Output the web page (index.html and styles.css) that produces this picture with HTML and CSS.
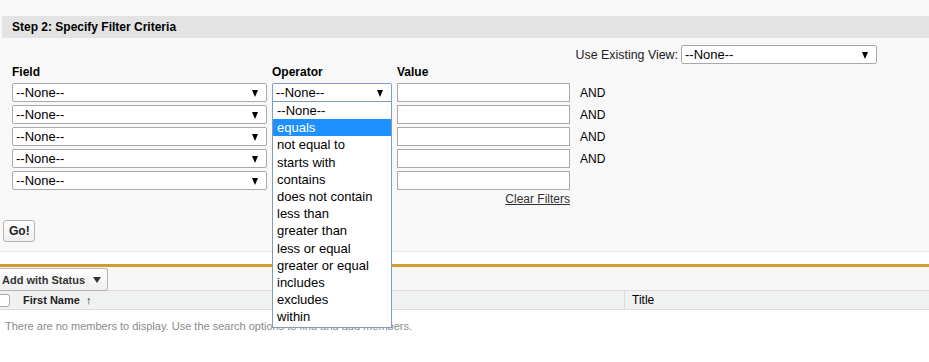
FILE: index.html
```html
<!DOCTYPE html>
<html lang="en">
<head>
  <meta charset="UTF-8">
  <meta name="viewport" content="width=device-width, initial-scale=1.0">
  <title>Specify Filter Criteria</title>
  <link rel="stylesheet" href="styles.css">
</head>
<body>
  <div class="filter-panel">
    <h2 class="step-title">Step 2: Specify Filter Criteria</h2>

    <div class="view-row">
      <span class="view-label">Use Existing View:</span>
      <div class="select view-select">--None--</div>
    </div>

    <div class="criteria">
      <div class="col-label">Field</div>
      <div class="col-label">Operator</div>
      <div class="col-label">Value</div>
      <div></div>

      <div class="select">--None--</div>
      <div class="op-cell">
        <div class="select focused">--None--</div>
        <ul class="op-list">
          <li>--None--</li>
          <li class="active">equals</li>
          <li>not equal to</li>
          <li>starts with</li>
          <li>contains</li>
          <li>does not contain</li>
          <li>less than</li>
          <li>greater than</li>
          <li>less or equal</li>
          <li>greater or equal</li>
          <li>includes</li>
          <li>excludes</li>
          <li>within</li>
        </ul>
      </div>
      <input class="value" type="text">
      <span class="and">AND</span>

      <div class="select">--None--</div>
      <div class="select hidden-op"></div>
      <input class="value" type="text">
      <span class="and">AND</span>

      <div class="select">--None--</div>
      <div class="select hidden-op"></div>
      <input class="value" type="text">
      <span class="and">AND</span>

      <div class="select">--None--</div>
      <div class="select hidden-op"></div>
      <input class="value" type="text">
      <span class="and">AND</span>

      <div class="select">--None--</div>
      <div class="select hidden-op"></div>
      <input class="value" type="text">
      <span></span>

      <div></div>
      <div></div>
      <a class="clear-link" href="#">Clear Filters</a>
      <div></div>
    </div>

    <button class="btn go-btn">Go!</button>
  </div>

  <div class="members">
    <div class="members-bar">
      <button class="btn status-btn">Add with Status <span class="caret"></span></button>
    </div>
    <div class="members-head">
      <div class="check-cell"><span class="checkbox"></span></div>
      <div class="name-cell">First Name <span class="sort">&#8593;</span></div>
      <div class="title-cell">Title</div>
    </div>
    <p class="empty">There are no members to display. Use the search options to find and add members.</p>
  </div>
</body>
</html>
```

FILE: styles.css
```css
* {
  margin: 0;
  padding: 0;
  box-sizing: border-box;
  font-family: "Liberation Sans", Arial, sans-serif;
}

body {
  background: #fff;
  color: #000;
  font-size: 12px;
}

.filter-panel {
  background: #f8f8f8;
  padding-top: 16px;
  height: 252px;
  border-bottom: 1px solid #e8e8e8;
}

.step-title {
  margin-left: 2px;
  height: 22px;
  line-height: 22px;
  padding-left: 10px;
  background: #e3e3e4;
  font-size: 12px;
  font-weight: bold;
  color: #000;
}

.view-row {
  display: flex;
  justify-content: flex-end;
  align-items: center;
  gap: 3px;
  margin-top: 7px;
  padding-right: 52px;
  height: 19px;
}

.view-label {
  font-size: 12.4px;
  color: #222;
}

.view-select {
  width: 196px;
}

.criteria {
  display: grid;
  grid-template-columns: 255px 120px 173px auto;
  column-gap: 5px;
  row-gap: 3px;
  padding-left: 12px;
  align-items: center;
}

.col-label {
  height: 16px;
  line-height: 16px;
  font-weight: bold;
  font-size: 12px;
  color: #000;
}

.select {
  position: relative;
  height: 19px;
  line-height: 17px;
  padding-left: 3px;
  background: #fff;
  border: 1px solid #a9a9a9;
  border-radius: 2px;
  font-size: 13px;
  color: #000;
  white-space: nowrap;
}

.select::after {
  content: "";
  position: absolute;
  right: 8px;
  top: 6px;
  border-left: 3.5px solid transparent;
  border-right: 3.5px solid transparent;
  border-top: 7px solid #000;
}

.select.focused {
  border-color: #7a9bd3;
}

.op-cell {
  position: relative;
}

.op-list {
  position: absolute;
  left: 0;
  top: 18px;
  width: 120px;
  list-style: none;
  background: #fff;
  border: 1px solid #7f9db9;
  padding-bottom: 2px;
  z-index: 5;
}

.op-list li {
  height: 17.2px;
  line-height: 17px;
  padding-left: 4px;
  font-size: 13px;
  color: #000;
}

.op-list li.active {
  background: #1e90ff;
  color: #fff;
}

.value {
  height: 19px;
  border: 1px solid #a9a9a9;
  background: #fff;
  font-size: 13px;
  padding: 0 3px;
}

.and {
  margin-left: 5px;
  font-size: 12px;
  color: #000;
}

.clear-link {
  justify-self: end;
  line-height: 14px;
  margin-top: -1px;
  color: #333;
  font-size: 12px;
  text-decoration: underline;
}

.btn {
  display: inline-flex;
  align-items: center;
  height: 22px;
  padding: 0 6px;
  border: 1px solid #b5b5b5;
  border-radius: 3px;
  background: linear-gradient(#fff, #f0f0f0);
  font-size: 12px;
  font-weight: bold;
  color: #222;
  white-space: nowrap;
}

.go-btn {
  margin: 14px 0 0 3px;
  width: 32px;
  height: 22px;
  padding: 0 0 0 5px;
}

.members {
  margin-top: 12px;
  border-top: 3px solid #d19c30;
}

.members-bar {
  background: #f7f7f7;
  height: 23px;
  padding-top: 1px;
}

.status-btn {
  width: 108px;
  height: 23px;
  padding: 0 6px 0 2px;
  justify-content: space-between;
  border-left: none;
  border-radius: 0 3px 3px 0;
  font-size: 11px;
  color: #333;
}

.caret {
  display: inline-block;
  border-left: 4px solid transparent;
  border-right: 4px solid transparent;
  border-top: 6px solid #333;
}

.members-head {
  display: flex;
  height: 20px;
  align-items: center;
  background: #f0f1f1;
  border-top: 1px solid #dcdcdc;
  border-bottom: 1px solid #dcdcdc;
}

.check-cell {
  width: 23px;
  height: 100%;
  display: flex;
  align-items: center;
}

.checkbox {
  width: 11px;
  height: 13px;
  margin-left: -1px;
  border: 1px solid #aaa;
  border-radius: 0 3px 3px 0;
  background: #fff;
}

.name-cell {
  width: 602px;
  height: 100%;
  line-height: 18px;
  font-weight: bold;
  font-size: 11px;
  color: #222;
  border-right: 1px solid #dcdcdc;
}

.sort {
  font-weight: bold;
  font-size: 11px;
  margin-left: 3px;
}

.title-cell {
  padding-left: 7px;
  line-height: 18px;
  font-size: 12px;
}

.empty {
  margin: 10px 0 0 5px;
  font-size: 11px;
  color: #8a8a8a;
}
```
